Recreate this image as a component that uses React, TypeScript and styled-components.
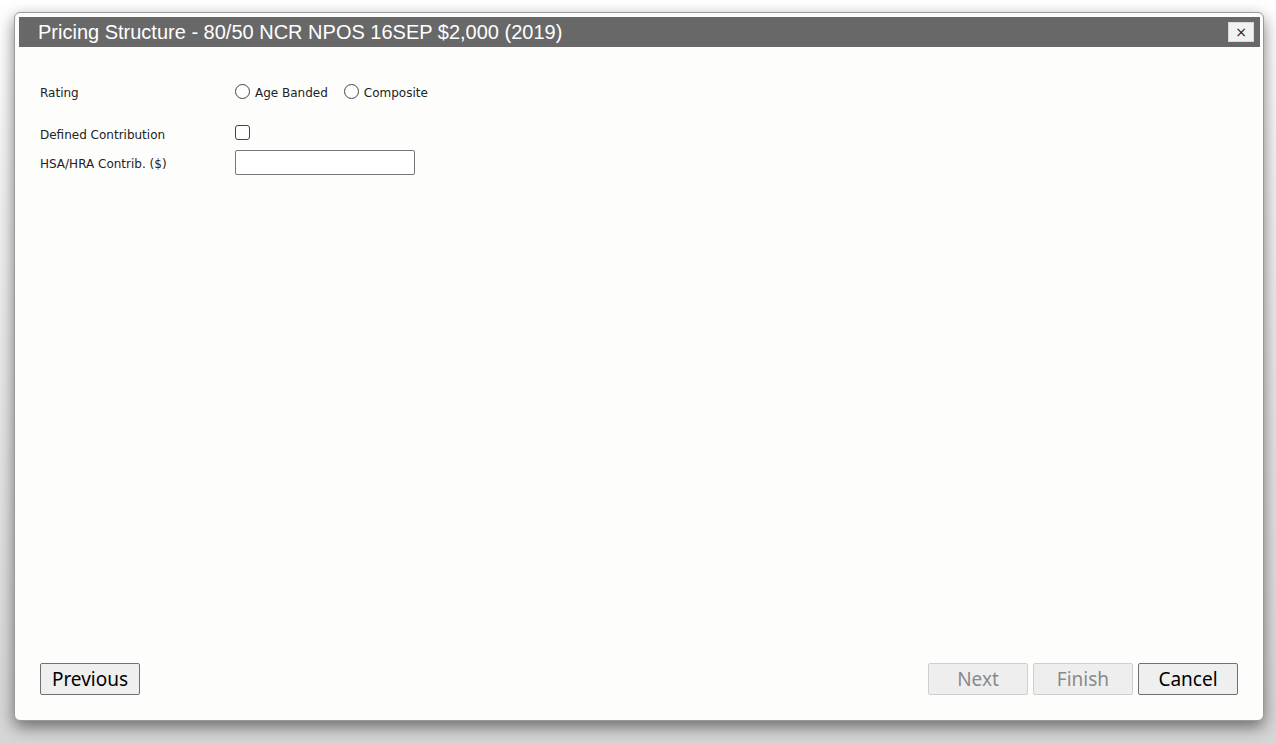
import React from 'react'
import styled, { createGlobalStyle } from 'styled-components'

const GlobalStyle = createGlobalStyle`
    html, body {
        margin: 0;
        padding: 0;
        height: 100%;
    }
    body {
        background: linear-gradient(to bottom, #ffffff 0%, #f2f2f2 25%, #e4e4e4 60%, #d6d6d6 100%);
        font-family: "DejaVu Sans", Verdana, sans-serif;
        overflow: hidden;
    }
`

const Page = styled.div`
    width: 1276px;
    height: 744px;
    padding: 12px 0 0 14px;
    box-sizing: border-box;
`

const Dialog = styled.div`
    width: 1250px;
    height: 709px;
    box-sizing: border-box;
    background: #fdfdfc;
    border: 1px solid #9a9a9a;
    border-radius: 6px;
    box-shadow: 0 6px 16px rgba(0, 0, 0, 0.5);
    display: flex;
    flex-direction: column;
`

const TitleBar = styled.div`
    margin: 4px 3px 0 4px;
    height: 30px;
    background: #686868;
    display: flex;
    align-items: center;
    justify-content: space-between;
    padding: 0 6px 0 19px;
`

const Title = styled.span`
    color: #ffffff;
    font-family: "Liberation Sans", Arial, sans-serif;
    font-size: 20px;
    padding-top: 1px;
`

const CloseButton = styled.button`
    width: 26px;
    height: 20px;
    padding: 0;
    border: 1px solid #d8d8d8;
    background: #f2f2f2;
    color: #222;
    font-family: "DejaVu Sans", sans-serif;
    font-size: 14px;
    line-height: 16px;
    cursor: pointer;
`

const Body = styled.div`
    flex: 1;
    padding: 33px 25px 0 25px;
`

const Row = styled.div<{ $top: number }>`
    display: grid;
    grid-template-columns: 195px auto;
    align-items: center;
    height: 24px;
    margin-top: ${p => p.$top}px;
`

const Label = styled.label<{ $drop: number }>`
    font-size: 12px;
    color: #222;
    padding-top: ${p => p.$drop}px;
`

const Controls = styled.div`
    display: flex;
    align-items: center;
`

const Radio = styled.input.attrs({ type: 'radio' })`
    appearance: none;
    width: 15px;
    height: 15px;
    margin: 0 5px 1px 0;
    border: 1px solid #444;
    border-radius: 50%;
    background: #fff;
    box-sizing: border-box;
`

const Option = styled.span`
    font-size: 12px;
    color: #222;
    margin-right: 16px;
    padding-top: 2px;
`

const Checkbox = styled.input.attrs({ type: 'checkbox' })`
    appearance: none;
    width: 15px;
    height: 15px;
    margin: 0;
    border: 1px solid #444;
    border-radius: 3px;
    background: #fff;
    box-sizing: border-box;
`

const TextBox = styled.input`
    width: 180px;
    height: 25px;
    margin: 0;
    box-sizing: border-box;
    border: 1px solid #767676;
    border-radius: 2px;
    background: #fff;
`

const Footer = styled.div`
    display: flex;
    align-items: center;
    padding: 0 25px 25px 25px;
`

const Spacer = styled.div`
    flex: 1;
`

const Button = styled.button`
    width: 100px;
    height: 32px;
    margin-left: 5px;
    box-sizing: border-box;
    border: 1px solid #707070;
    border-radius: 2px;
    background: #efefef;
    color: #000;
    font-family: "Noto Sans", "Open Sans", sans-serif;
    font-size: 19px;
    padding: 0;
    &:first-child {
        margin-left: 0;
    }
    &:disabled {
        border-color: #cfcfcf;
        background: #eeeeee;
        color: #8a8a8a;
    }
`

export default function App() {
    return (
        <Page>
            <GlobalStyle />
            <Dialog>
                <TitleBar>
                    <Title>Pricing Structure - 80/50 NCR NPOS 16SEP $2,000 (2019)</Title>
                    <CloseButton>×</CloseButton>
                </TitleBar>
                <Body>
                    <Row $top={0}>
                        <Label $drop={2}>Rating</Label>
                        <Controls>
                            <Radio name="rating" />
                            <Option>Age Banded</Option>
                            <Radio name="rating" />
                            <Option>Composite</Option>
                        </Controls>
                    </Row>
                    <Row $top={16}>
                        <Label $drop={6}>Defined Contribution</Label>
                        <Controls>
                            <Checkbox />
                        </Controls>
                    </Row>
                    <Row $top={6}>
                        <Label $drop={2}>HSA/HRA Contrib. ($)</Label>
                        <Controls>
                            <TextBox />
                        </Controls>
                    </Row>
                </Body>
                <Footer>
                    <Button>Previous</Button>
                    <Spacer />
                    <Button disabled>Next</Button>
                    <Button disabled>Finish</Button>
                    <Button>Cancel</Button>
                </Footer>
            </Dialog>
        </Page>
    )
}
